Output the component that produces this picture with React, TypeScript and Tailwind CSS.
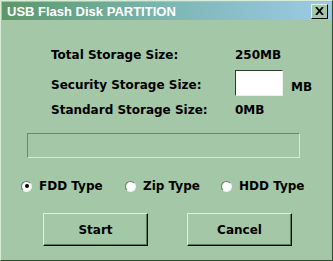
const font = "font-['Comic_Sans_MS','DejaVu_Sans',sans-serif]";

function Radio({ label, checked }: { label: string; checked?: boolean }) {
  return (
    <label className="flex items-center gap-[7px]">
      <span className="w-[11px] h-[11px] rounded-full bg-white border border-t-[#5d7d60] border-l-[#5d7d60] border-r-[#e8f3e8] border-b-[#e8f3e8] flex items-center justify-center">
        {checked && <span className="w-[4px] h-[4px] rounded-full bg-black" />}
      </span>
      <span>{label}</span>
    </label>
  );
}

function Button({ children }: { children: React.ReactNode }) {
  return (
    <button className="w-[105px] h-[33px] bg-[#a3c7a7] border border-t-[#e0f0e0] border-l-[#e0f0e0] border-r-black border-b-black shadow-[inset_-1px_-1px_0_#5d7d60] text-[12px] font-bold text-black">
      {children}
    </button>
  );
}

export default function App() {
  return (
    <div className={`w-[333px] h-[261px] bg-[#a3c7a7] border border-t-[#d8ecd8] border-l-[#d8ecd8] border-r-[#2e4a30] border-b-[#2e4a30] p-px flex flex-col text-black ${font}`}>
      {/* Title bar */}
      <div className="h-[18px] flex items-center justify-between pl-[5px] pr-[3px] bg-gradient-to-r from-[#5c9768] via-[#7cb6b4] to-[#9ccbe8]">
        <span className="font-['Liberation_Sans',Arial,sans-serif] font-bold text-[13px] text-white leading-none">
          USB Flash Disk PARTITION
        </span>
        <span className="w-[17px] h-[15px] bg-[#a3c7a7] border border-t-[#e0f0e0] border-l-[#e0f0e0] border-r-black border-b-black flex items-center justify-center">
          <svg width="9" height="8" viewBox="0 0 9 8">
            <path d="M1 0 L8 8 M8 0 L1 8" stroke="black" strokeWidth="1.8" />
          </svg>
        </span>
      </div>

      {/* Storage info */}
      <div className="mt-[25px] ml-[49px] flex flex-col text-[12px] font-bold">
        <div className="h-[20px] flex items-center">
          <span className="w-[184px]">Total Storage Size:</span>
          <span>250MB</span>
        </div>
        <div className="mt-[5px] h-[26px] flex items-center">
          <span className="w-[184px] pt-[3px]">Security Storage Size:</span>
          <input className="w-[48px] h-[26px] bg-white border border-t-[#2b3f2c] border-l-[#2b3f2c] border-r-[#e8f3e8] border-b-[#e8f3e8] outline-none" />
          <span className="ml-[8px] pt-[8px]">MB</span>
        </div>
        <div className="mt-[4px] h-[20px] flex items-center">
          <span className="w-[184px]">Standard Storage Size:</span>
          <span>0MB</span>
        </div>
      </div>

      {/* Progress */}
      <div className="mt-[13px] ml-[25px] w-[273px] h-[25px] border border-t-[#5f8f64] border-l-[#5f8f64] border-r-[#d4ead4] border-b-[#d4ead4]" />

      {/* Type radios */}
      <div className="mt-[20px] ml-[19px] h-[16px] flex items-center text-[12px] font-bold">
        <div className="w-[104px]"><Radio label="FDD Type" checked /></div>
        <div className="w-[96px]"><Radio label="Zip Type" /></div>
        <Radio label="HDD Type" />
      </div>

      {/* Buttons */}
      <div className="mt-[19px] ml-[41px] flex gap-[39px]">
        <Button>Start</Button>
        <Button>Cancel</Button>
      </div>
    </div>
  );
}
